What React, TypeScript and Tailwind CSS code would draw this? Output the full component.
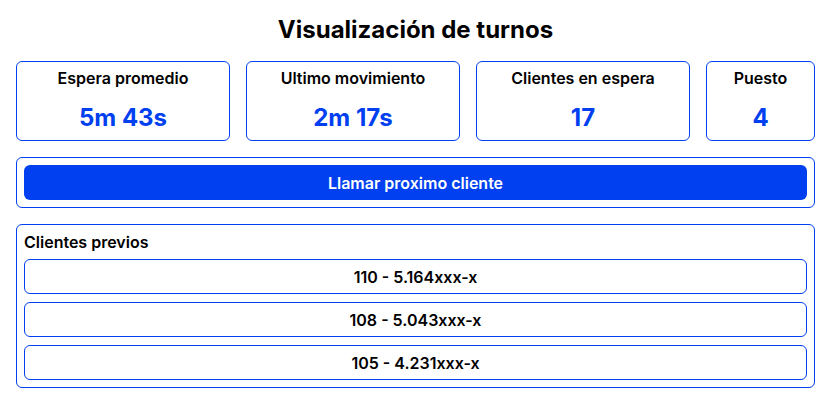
const stats = [
  { label: 'Espera promedio', value: '5m 43s' },
  { label: 'Ultimo movimiento', value: '2m 17s' },
  { label: 'Clientes en espera', value: '17' },
  { label: 'Puesto', value: '4' },
]

const previos = ['110 - 5.164xxx-x', '108 - 5.043xxx-x', '105 - 4.231xxx-x']

export default function App() {
  return (
    <div className="min-h-screen bg-white px-4 pt-[14px] text-black font-['Inter',sans-serif]">
      <h1 className="text-center text-2xl leading-8 font-bold mb-[15px]">Visualización de turnos</h1>

      <div className="grid grid-cols-[214px_214px_214px_1fr] gap-4">
        {stats.map((s) => (
          <div
            key={s.label}
            className="h-[80px] flex flex-col items-center rounded-md border border-[#0040f0] pt-[4px]"
          >
            <span className="text-base leading-6 font-semibold">{s.label}</span>
            <span className="mt-[12px] text-2xl leading-8 font-bold text-[#0040f0]">{s.value}</span>
          </div>
        ))}
      </div>

      <div className="mt-4 rounded-md border border-[#0040f0] p-[7px]">
        <button className="w-full h-[35px] rounded-md bg-[#0040f0] text-base font-semibold text-white">
          Llamar proximo cliente
        </button>
      </div>

      <div className="mt-4 rounded-md border border-[#0040f0] p-[7px]">
        <h2 className="text-base leading-5 font-semibold mb-[7px]">Clientes previos</h2>
        <div className="flex flex-col gap-2">
          {previos.map((p) => (
            <div
              key={p}
              className="h-[35px] flex items-center justify-center rounded-md border border-[#0040f0] text-base font-semibold"
            >
              {p}
            </div>
          ))}
        </div>
      </div>
    </div>
  )
}
